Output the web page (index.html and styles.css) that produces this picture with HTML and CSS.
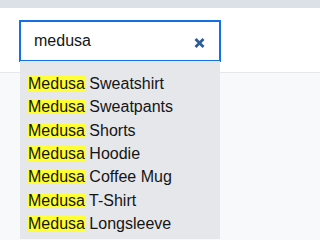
FILE: index.html
```html
<!DOCTYPE html>
<html>
<head>
<meta charset="utf-8">
<link rel="stylesheet" href="styles.css">
</head>
<body>
<div class="topband"></div>
<header class="bar">
  <div class="search">
    <div class="field">
      <span class="query">medusa</span>
      <svg class="clear" width="11" height="10" viewBox="0 0 11 10"><path d="M1.5 1 L9.5 9 M9.5 1 L1.5 9"/></svg>
    </div>
    <ul class="results">
      <li><span class="hl">Medusa</span> Sweatshirt</li>
      <li><span class="hl">Medusa</span> Sweatpants</li>
      <li><span class="hl">Medusa</span> Shorts</li>
      <li><span class="hl">Medusa</span> Hoodie</li>
      <li><span class="hl">Medusa</span> Coffee Mug</li>
      <li><span class="hl">Medusa</span> T-Shirt</li>
      <li><span class="hl">Medusa</span> Longsleeve</li>
    </ul>
  </div>
</header>
</body>
</html>
```
FILE: styles.css
```css
html, body {
  margin: 0;
  padding: 0;
}
body {
  background: #f8f9fa;
  font-family: "Liberation Sans", Arial, sans-serif;
  font-size: 16px;
  color: #151515;
  overflow: hidden;
  height: 239px;
}
.topband {
  height: 8px;
  background: #dce1e7;
}
.bar {
  height: 52px;
  padding: 12px 0 0 19px;
  background: #ffffff;
  border-bottom: 1px solid #e7e8eb;
}
.search {
  position: relative;
  width: 202px;
}
.field {
  box-sizing: border-box;
  height: 42px;
  border: 2px solid #1570e8;
  display: flex;
  align-items: center;
  justify-content: space-between;
  padding: 0 14px 0 13px;
  background: #fff;
}
.query {
  margin-top: -1px;
}
.clear {
  margin-top: 3px;
}
.clear path {
  stroke: #2d5d97;
  stroke-width: 2.8;
  fill: none;
}
.results {
  position: absolute;
  top: 41px;
  left: 1px;
  width: 200px;
  box-sizing: border-box;
  margin: 0;
  padding: 11px 8px 0;
  list-style: none;
  background: #e5e7eb;
  height: 178px;
}
.results li {
  line-height: 23.33px;
  white-space: nowrap;
}
.hl {
  display: inline-block;
  background: #ffff33;
  line-height: 15px;
  height: 15px;
}
```
